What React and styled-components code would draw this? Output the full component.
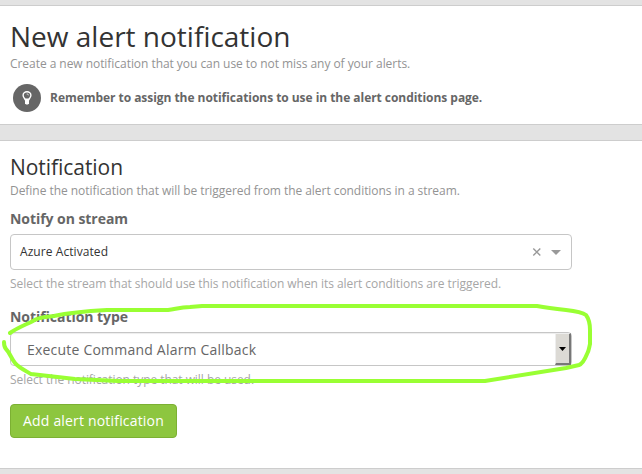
import React from 'react';
import styled, { createGlobalStyle } from 'styled-components';

const GlobalStyle = createGlobalStyle`
  * { box-sizing: border-box; }
  body {
    margin: 0;
    background: #e3e3e3;
    color: #666;
    font: 12px/18px 'Open Sans', 'Noto Sans', sans-serif;
    font-feature-settings: 'liga' 1;
    overflow: hidden;
  }
`;

const Page = styled.main`
  display: flex;
  flex-direction: column;
  gap: 15px;
  height: 474px;
  padding-top: 5px;
`;

const Panel = styled.section`
  position: relative;
  flex: none;
  height: ${(p) => p.$height}px;
  padding: 15px 10px 0;
  background: #fff;
  border: solid #cdcdcd;
  border-width: 1px 0;
`;

const Title = styled.h1`
  margin: 0;
  font-size: 28px;
  font-weight: 400;
  line-height: 30px;
  color: #333;
  white-space: nowrap;
`;

const Subtitle = styled.h2`
  margin: 0;
  font-size: 21px;
  font-weight: 400;
  line-height: 22px;
  height: 25px;
  letter-spacing: -0.06px;
  color: #333;
`;

const Description = styled.p`
  margin: ${(p) => p.$top}px 0 0;
  line-height: 18px;
  letter-spacing: -0.05px;
  color: #939393;
  white-space: nowrap;
`;

const Reminder = styled.div`
  display: flex;
  align-items: center;
  gap: 9px;
  height: 28px;
  margin: 11px 0 0 3px;
  font-weight: 700;
  letter-spacing: -0.045px;
`;

const Badge = styled.span`
  display: flex;
  width: 28px;
  height: 28px;
  align-items: center;
  justify-content: center;
  border-radius: 50%;
  background: #666;
`;

const Label = styled.label`
  display: block;
  margin-top: ${(p) => p.$top}px;
  font-size: 14px;
  font-weight: 700;
  line-height: 20px;
  letter-spacing: -0.05px;
`;

const StreamSelect = styled.div`
  display: flex;
  align-items: center;
  width: 562px;
  height: 36px;
  margin-top: 5px;
  padding: 0 9px;
  border: 1px solid #c6c6c6;
  border-radius: 4px;
  color: #333;
`;

const StreamValue = styled.span`
  flex: 1;
  letter-spacing: 0.07px;
`;

const HelpText = styled.p`
  margin: ${(p) => p.$top}px 0 0;
  line-height: 18px;
  letter-spacing: -0.05px;
  color: #a6a6a6;
`;

const TypeSelect = styled.div`
  display: flex;
  align-items: center;
  justify-content: space-between;
  width: 562px;
  height: 34px;
  margin-top: 5px;
  padding-left: 16px;
  border: 1px solid #c6c6c6;
  border-radius: 4px;
  box-shadow: inset 0 1px 1px rgba(0, 0, 0, 0.075);
  font-size: 14px;
  letter-spacing: 0.21px;
`;

const TypeValue = styled.span`
  padding-top: 2px;
`;

const DropButton = styled.span`
  display: flex;
  align-items: center;
  justify-content: center;
  width: 16px;
  height: 32px;
  border: solid;
  border-width: 1px 2px 2px 1px;
  border-color: #eee #777 #777 #eee;
  background: #dcdad5;
`;

const SubmitButton = styled.button`
  display: block;
  width: 167px;
  height: 34px;
  margin-top: 15px;
  padding: 0;
  border: 1px solid #7cb033;
  border-radius: 4px;
  background: #8dc63f;
  color: #fff;
  font: 14px/20px 'Open Sans', 'Noto Sans', sans-serif;
  letter-spacing: 0.18px;
`;

const Marker = styled.svg`
  position: absolute;
  left: 0;
  top: 154px;
  pointer-events: none;
`;

const BulbIcon = () => (
  <svg width="10" height="14" viewBox="0 0 10 14">
    <path
      d="M3.2 9.2C3.2 7.3 1.1 6.7 1.1 4.2a3.9 3.4 0 0 1 7.8 0c0 2.5-2.1 3.1-2.1 5"
      fill="none"
      stroke="#fff"
      strokeWidth="1.4"
    />
    <path d="M3 7.4h4v4.9L6 13.6H4l-1-1.3z" fill="#fff" />
    <path d="M4.7 3c1.2 0 1.8.5 1.9 1.3" fill="none" stroke="#fff" strokeWidth=".8" />
  </svg>
);

const StreamControls = () => (
  <svg width="32" height="12" viewBox="0 0 32 12">
    <path d="M3.3 2.4l7 7M10.3 2.4l-7 7" stroke="#999" strokeWidth="1.4" fill="none" />
    <path d="M21 4h10l-5 5z" fill="#999" />
  </svg>
);

const App = () => (
  <>
    <GlobalStyle />
    <Page>
      <Panel $height={120}>
        <Title>New alert notification</Title>
        <Description $top={4}>
          Create a new notification that you can use to not miss any of your alerts.
        </Description>
        <Reminder>
          <Badge>
            <BulbIcon />
          </Badge>
          Remember to assign the notifications to use in the alert conditions page.
        </Reminder>
      </Panel>
      <Panel $height={329}>
        <Subtitle>Notification</Subtitle>
        <Description $top={1}>
          Define the notification that will be triggered from the alert conditions in a stream.
        </Description>
        <Label $top={9}>Notify on stream</Label>
        <StreamSelect>
          <StreamValue>Azure Activated</StreamValue>
          <StreamControls />
        </StreamSelect>
        <HelpText $top={5}>
          Select the stream that should use this notification when its alert conditions are
          triggered.
        </HelpText>
        <Label $top={14}>Notification type</Label>
        <TypeSelect>
          <TypeValue>Execute Command Alarm Callback</TypeValue>
          <DropButton>
            <svg width="7" height="4" viewBox="0 0 7 4">
              <path d="M0 0h7L3.5 4z" fill="#000" />
            </svg>
          </DropButton>
        </TypeSelect>
        <HelpText $top={5}>Select the notification type that will be used.</HelpText>
        <SubmitButton>Add alert notification</SubmitButton>
        <Marker width="642" height="100" viewBox="0 295 642 100">
          <path
            d="M10 333C17 328 25 325 33 321C38 317 46 317 54 316C72 312 88 311 107 310H168C176 309 180 307 190 307L202 306H537C547 308 556 309 566 310C575 311 582 312 586 315C589 319 590 324 590 330V344C589 348 589 351 587 354C585 359 582 364 579 365L566 368L485 381H118L75 379L31 374C24 370 18 367 15 363C11 358 10 353 6 349C4 347 4 344 4 342"
            fill="none"
            stroke="#99ff33"
            strokeWidth="4"
            strokeLinecap="round"
            strokeLinejoin="round"
          />
        </Marker>
      </Panel>
    </Page>
  </>
);

export default App;
